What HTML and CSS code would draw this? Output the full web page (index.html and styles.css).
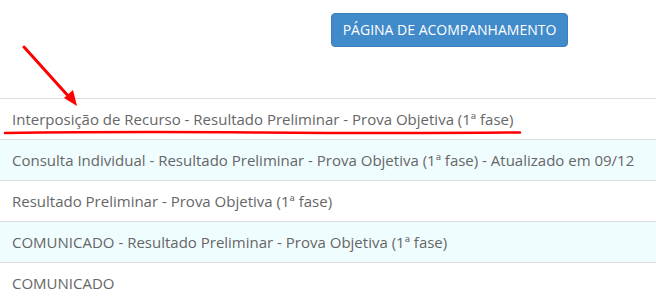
FILE: index.html
```html
<!DOCTYPE html>
<html lang="pt-BR">
<head>
<meta charset="utf-8">
<link rel="stylesheet" href="styles.css">
</head>
<body>
<div class="page">
  <div class="top">
    <a class="btn">PÁGINA DE ACOMPANHAMENTO</a>
  </div>
  <ul class="list">
    <li class="row">Interposição de Recurso - Resultado Preliminar - Prova Objetiva (1ª fase)</li>
    <li class="row alt">Consulta Individual - Resultado Preliminar - Prova Objetiva (1ª fase) - Atualizado em 09/12</li>
    <li class="row">Resultado Preliminar - Prova Objetiva (1ª fase)</li>
    <li class="row alt">COMUNICADO - Resultado Preliminar - Prova Objetiva (1ª fase)</li>
    <li class="row">COMUNICADO</li>
  </ul>
  <svg class="annot" width="656" height="303" viewBox="0 0 656 303">
    <line x1="24" y1="47" x2="70" y2="98" stroke="#ff0000" stroke-width="3" stroke-linecap="round"/>
    <polygon points="77,106 64,98 73,90" fill="#ff0000"/>
    <path d="M5 133 Q 120 131.5 260 132.5 T 520 132.5" stroke="#ff0000" stroke-width="2.5" fill="none" stroke-linecap="round"/>
  </svg>
</div>
</body>
</html>
```

FILE: styles.css
```css
html, body {
  margin: 0;
  padding: 0;
  background: #ffffff;
}
.page {
  position: relative;
  width: 656px;
  height: 303px;
  overflow: hidden;
  font-family: "Open Sans", "Liberation Sans", sans-serif;
}
.top {
  height: 98px;
  padding-top: 13px;
  box-sizing: border-box;
}
.btn {
  display: inline-block;
  margin-left: 331px;
  width: 237px;
  height: 34px;
  box-sizing: border-box;
  background: #428bca;
  border: 1px solid #3a7fbd;
  border-radius: 4px;
  color: #ffffff;
  font-size: 14px;
  line-height: 32px;
  text-align: center;
  white-space: nowrap;
}
.list {
  list-style: none;
  margin: 0;
  padding: 0;
  border-top: 1px solid #dddddd;
}
.row {
  padding: 10px 12px;
  line-height: 20px;
  font-size: 15px;
  color: #666666;
  border-bottom: 1px solid #dddddd;
  white-space: nowrap;
}
.row.alt {
  background: #f0fdff;
}
.annot {
  position: absolute;
  left: 0;
  top: 0;
  pointer-events: none;
}
```
